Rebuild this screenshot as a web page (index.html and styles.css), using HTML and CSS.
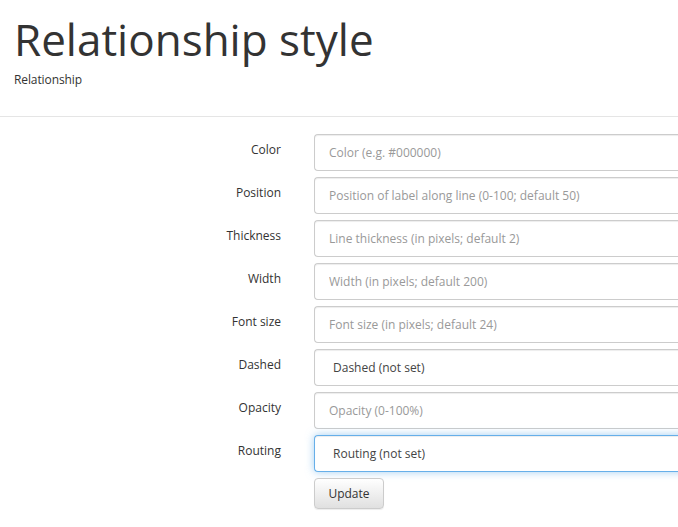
FILE: index.html
```html
<!DOCTYPE html>
<html>
<head>
<meta charset="utf-8">
<link rel="stylesheet" href="styles.css">
</head>
<body>
<header class="page-header">
  <h1 class="title">Relationship style</h1>
  <div class="subtitle">Relationship</div>
</header>
<form class="form">
  <div class="row"><label class="lbl">Color</label><input class="ctl" type="text" placeholder="Color (e.g. #000000)"></div>
  <div class="row"><label class="lbl">Position</label><input class="ctl" type="text" placeholder="Position of label along line (0-100; default 50)"></div>
  <div class="row"><label class="lbl">Thickness</label><input class="ctl" type="text" placeholder="Line thickness (in pixels; default 2)"></div>
  <div class="row"><label class="lbl">Width</label><input class="ctl" type="text" placeholder="Width (in pixels; default 200)"></div>
  <div class="row"><label class="lbl">Font size</label><input class="ctl" type="text" placeholder="Font size (in pixels; default 24)"></div>
  <div class="row"><label class="lbl">Dashed</label><div class="ctl sel">Dashed (not set)</div></div>
  <div class="row"><label class="lbl">Opacity</label><input class="ctl" type="text" placeholder="Opacity (0-100%)"></div>
  <div class="row"><label class="lbl">Routing</label><div class="ctl sel focus">Routing (not set)</div></div>
  <div class="row"><span class="lbl"></span><button class="btn" type="button">Update</button></div>
</form>
</body>
</html>
```
FILE: styles.css
```css
html, body {
  margin: 0;
  padding: 0;
  background: #fff;
  overflow: hidden;
  font-family: "Open Sans", "DejaVu Sans", sans-serif;
  color: #333;
}
.page-header {
  padding: 15px 14px 0;
  height: 101px;
  border-bottom: 1px solid #e5e5e5;
}
.title {
  margin: 0;
  font-size: 44px;
  font-weight: 400;
  line-height: 49px;
  color: #333;
}
.subtitle {
  margin-top: 7px;
  font-size: 12px;
  line-height: 17px;
  letter-spacing: -0.1px;
}
.form {
  padding-top: 17px;
  padding-bottom: 6px;
  display: flex;
  flex-direction: column;
  gap: 6px;
  overflow: hidden;
}
.row {
  display: flex;
  align-items: flex-start;
}
.lbl {
  width: 281px;
  flex: none;
  text-align: right;
  font-size: 12px;
  line-height: 17px;
  padding-top: 7px;
  margin-right: 33px;
  color: #333;
}
.ctl {
  flex: none;
  box-sizing: border-box;
  width: 400px;
  height: 37px;
  border: 1px solid #ccc;
  border-right: none;
  border-radius: 4px 0 0 4px;
  padding: 0 14px;
  font-family: "Open Sans", "DejaVu Sans", sans-serif;
  font-size: 12px;
  color: #555;
  background: #fff;
  box-shadow: inset 0 1px 1px rgba(0,0,0,0.075);
  outline: none;
}
.ctl::placeholder {
  color: #999;
}
.sel {
  padding-left: 18px;
  line-height: 35px;
  color: #444;
}
.focus {
  border-color: #66afe9;
  box-shadow: inset 0 1px 1px rgba(0,0,0,0.075), 0 0 8px rgba(102,175,233,0.6);
}
.btn {
  width: 70px;
  height: 31px;
  border: 1px solid #ccc;
  border-radius: 4px;
  background: linear-gradient(to bottom, #fff 0%, #e0e0e0 100%);
  font-family: "Open Sans", "DejaVu Sans", sans-serif;
  font-size: 12px;
  color: #333;
  padding: 0;
  box-shadow: inset 0 1px 0 rgba(255,255,255,0.15), 0 1px 1px rgba(0,0,0,0.075);
}
```
